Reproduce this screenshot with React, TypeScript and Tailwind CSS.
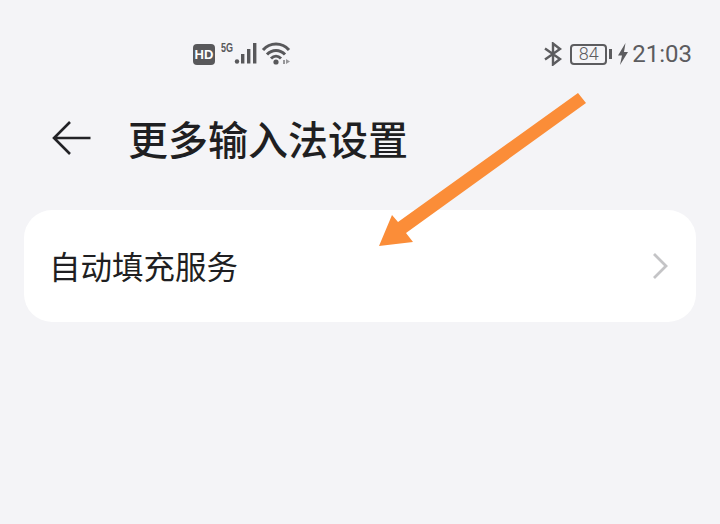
export default function App() {
  return (
    <div className="relative w-[720px] h-[524px] overflow-hidden bg-[#f4f4f7] font-['Noto_Sans_CJK_SC','Noto_Sans',sans-serif]">
      <div className="h-[42px]" />
      <div className="flex items-center justify-between h-[24px] pl-[193px] pr-[28px]">
        <div className="flex items-center">
          <div className="flex items-center justify-center w-[22px] h-[21px] rounded-[4px] bg-[#58585b] text-white text-[13px] leading-none font-bold font-['Liberation_Sans',sans-serif]">HD</div>
          <svg width="70" height="24" viewBox="0 0 70 24" className="ml-[6px]" fill="#58585b">
            <text x="0" y="10" fontSize="12" fontWeight="700" fontFamily="Liberation Sans, sans-serif" textLength="12" lengthAdjust="spacingAndGlyphs">5G</text>
            <circle cx="16" cy="19.5" r="2.2" />
            <rect x="20" y="12" width="3.4" height="9.5" />
            <rect x="26" y="7" width="3.4" height="14.5" />
            <rect x="32" y="1" width="3.4" height="20.5" />
            <g fill="none" stroke="#58585b" strokeWidth="3">
              <path d="M42 8 C49 0 61 0 68 8" />
              <path d="M46 12.5 C51 7 59 7 64 12.5" />
              <path d="M50 16.5 C53 13.5 57 13.5 60 16.5" />
            </g>
            <circle cx="55" cy="20" r="2.6" />
            <path d="M62 18 h2 v4 h-2z M65 17 l4 2.5 -4 2.5z" opacity="0.6" />
          </svg>
        </div>
        <div className="flex items-center text-[#5c5c5f]">
          <svg width="20" height="24" viewBox="0 0 20 24" fill="none" stroke="#5c5c5f" strokeWidth="2.4">
            <path d="M2 6.5 L17 17 L10 22.5 V1.5 L17 7 L2 17.5" />
          </svg>
          <div className="ml-[7px] flex items-center justify-center w-[37px] h-[21px] rounded-[4px] border-2 border-[#5c5c5f] text-[18px] leading-none font-light font-['Roboto',sans-serif]">84</div>
          <div className="ml-[2px] w-[3px] h-[10px] bg-[#5c5c5f]" />
          <svg width="12" height="24" viewBox="0 0 12 24" fill="#5c5c5f" className="ml-[5px]">
            <path d="M8.5 1 L1 13.5 H5 L3 23 L11 10 H7 Z" />
          </svg>
          <span className="ml-[3px] text-[24px] leading-none font-['Roboto',sans-serif]">21:03</span>
        </div>
      </div>

      <div className="flex items-center h-[44px] mt-[50px] pl-[52px]">
        <svg width="40" height="36" viewBox="0 0 40 36" fill="none" stroke="#222226" strokeWidth="2.6">
          <path d="M38.5 18 H2 M18 2 L2 18 L18 34" />
        </svg>
        <span className="ml-[36px] text-[40px] leading-none font-medium text-[#1f1f22]">更多输入法设置</span>
      </div>

      <div className="mx-[24px] mt-[50px] h-[112px] rounded-[28px] bg-white flex items-center justify-between pl-[25px] pr-[28px]">
        <span className="text-[31.5px] leading-none text-[#1f1f22]">自动填充服务</span>
        <svg width="16" height="28" viewBox="0 0 16 28" fill="none" stroke="#c4c4c6" strokeWidth="2.8">
          <path d="M2 2 L14 14 L2 26" />
        </svg>
      </div>

      <svg width="720" height="524" viewBox="0 0 720 524" className="absolute inset-0 pointer-events-none">
        <path d="M578 93 L586 103 L406 233 L413 242 L379 246 L392 215 L398 222 Z" fill="#fb8d38" />
      </svg>
    </div>
  );
}
